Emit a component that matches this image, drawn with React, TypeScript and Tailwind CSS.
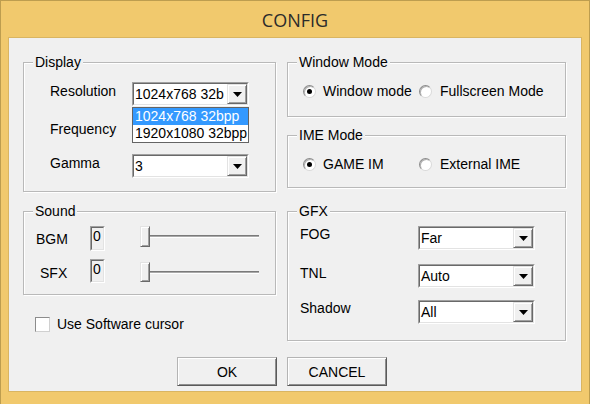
import type { ReactNode } from "react";

const FONT = "font-['Liberation_Sans',Arial,sans-serif]";

function GroupBox({
  title,
  className,
  children,
}: {
  title: string;
  className: string;
  children: ReactNode;
}) {
  return (
    <div
      className={`relative border border-[#b9b9b9] shadow-[inset_1px_1px_0_#ffffff,1px_1px_0_#ffffff] ${className}`}
    >
      <span className="absolute left-[9px] top-[-10px] bg-[#f0f0f0] px-[2px] text-[14px] leading-[18px] text-black">
        {title}
      </span>
      {children}
    </div>
  );
}

function Triangle() {
  return (
    <svg width="9" height="5" viewBox="0 0 9 5" className="block">
      <polygon points="0,0 9,0 4.5,5" fill="#000" />
    </svg>
  );
}

function Combo({ value, width = "w-[117px]" }: { value: string; width?: string }) {
  return (
    <div
      className={`h-[24px] ${width} border border-t-[#a0a0a0] border-l-[#a0a0a0] border-r-white border-b-white`}
    >
      <div className="flex h-full w-full border border-t-[#696969] border-l-[#696969] border-r-[#e3e3e3] border-b-[#e3e3e3] bg-white">
        <div className="min-w-0 flex-1 overflow-hidden whitespace-nowrap pl-[1px] text-[14px] leading-[20px] text-black">
          {value}
        </div>
        <div className="flex h-[20px] w-[20px] items-center justify-center border border-t-[#e3e3e3] border-l-[#e3e3e3] border-r-[#696969] border-b-[#696969] bg-[#f0f0f0] shadow-[inset_1px_1px_0_#ffffff,inset_-1px_-1px_0_#a0a0a0]">
          <Triangle />
        </div>
      </div>
    </div>
  );
}

function Radio({ checked }: { checked?: boolean }) {
  return (
    <span className="flex h-[13px] w-[13px] shrink-0 items-center justify-center rounded-full border border-t-[#8c8c8c] border-l-[#8c8c8c] border-r-[#d9d9d9] border-b-[#d9d9d9] bg-white shadow-[inset_1px_1px_0_#b0b0b0]">
      {checked ? <span className="h-[5px] w-[5px] rounded-full bg-black" /> : null}
    </span>
  );
}

function RadioRow({ first, second }: { first: string; second: string }) {
  return (
    <div className="flex h-[18px] items-center pl-[15px] text-[14px] leading-[18px] text-black">
      <div className="flex w-[116px] items-center gap-[7px] whitespace-nowrap">
        <Radio checked />
        <span>{first}</span>
      </div>
      <div className="flex items-center gap-[8px] whitespace-nowrap">
        <Radio />
        <span>{second}</span>
      </div>
    </div>
  );
}

function NumberBox() {
  return (
    <div className="h-full w-[15px] border border-t-[#a0a0a0] border-l-[#a0a0a0] border-r-white border-b-white">
      <div className="h-full w-full border border-t-[#696969] border-l-[#696969] border-r-[#e3e3e3] border-b-[#e3e3e3] bg-[#f0f0f0] pl-[1px] text-[14px] leading-[16px] text-black">
        0
      </div>
    </div>
  );
}

function Slider({ thumbH }: { thumbH: string }) {
  return (
    <div className="flex w-[119px] items-center">
      <div
        className={`${thumbH} w-[10px] shrink-0 border border-t-[#e3e3e3] border-l-[#e3e3e3] border-r-[#696969] border-b-[#696969] bg-[#f0f0f0] shadow-[inset_1px_1px_0_#ffffff,inset_-1px_-1px_0_#a0a0a0]`}
      />
      <div className="h-[3px] flex-1 border-t border-t-[#7a7a7a] bg-[#a9a9a9] border-b border-b-white" />
    </div>
  );
}

function PushButton({ label }: { label: string }) {
  return (
    <button className="h-[29px] w-[100px] border border-t-[#b4b4b4] border-l-[#b4b4b4] border-r-[#5a5a5a] border-b-[#5a5a5a] bg-[#f0f0f0] text-[14px] leading-[18px] text-black shadow-[inset_1px_1px_0_#ffffff,inset_-1px_-1px_0_#8f8f8f]">
      {label}
    </button>
  );
}

export default function App() {
  return (
    <div
      className={`h-[404px] w-[590px] overflow-hidden border-x border-t border-[#bd9d4f] bg-[#f1c96d] ${FONT}`}
    >
      <div className="flex h-[36px] items-center justify-center font-['Open_Sans',sans-serif] text-[18px] leading-none text-[#2b2b2b]">
        <span className="pt-[1px]">CONFIG</span>
      </div>

      <div className="mx-[7px] h-[355px] border border-[#d9b562] bg-[#f0f0f0] pl-[14px] pt-[24px]">
        {/* top row */}
        <div className="flex gap-[11px]">
          <GroupBox title="Display" className="h-[130px] w-[253px]">
            <div className="flex flex-col gap-[12px] pt-[19px] text-[14px] text-black">
              <div className="flex items-start">
                <span className="ml-[26px] w-[82px] leading-[18px]">Resolution</span>
                <Combo value="1024x768 32b" />
              </div>
              <div className="flex items-start">
                <span className="ml-[26px] mt-[2px] w-[82px] leading-[18px]">Frequency</span>
                <Combo value="" />
              </div>
              <div className="flex items-start">
                <span className="ml-[26px] w-[82px] leading-[18px]">Gamma</span>
                <Combo value="3" />
              </div>
            </div>
            {/* open dropdown list */}
            <div className="absolute left-[108px] top-[44px] w-[117px] border border-[#646464] bg-white text-[14px] leading-[17px]">
              <div className="bg-[#3399ff] pl-[2px] text-white">1024x768 32bpp</div>
              <div className="whitespace-nowrap pl-[2px] text-black">1920x1080 32bpp</div>
            </div>
          </GroupBox>

          <div className="flex w-[279px] flex-col">
            <GroupBox title="Window Mode" className="h-[55px] pt-[19px]">
              <RadioRow first="Window mode" second="Fullscreen Mode" />
            </GroupBox>
            <GroupBox title="IME Mode" className="mt-[18px] h-[53px] pt-[19px]">
              <RadioRow first="GAME IM" second="External IME" />
            </GroupBox>
          </div>
        </div>

        {/* second row */}
        <div className="mt-[19px] flex gap-[11px]">
          <div className="flex w-[253px] flex-col">
            <GroupBox title="Sound" className="h-[84px]">
              <div className="flex flex-col gap-[8px] pt-[14px] text-[14px] text-black">
                <div className="flex h-[25px] items-stretch">
                  <span className="ml-[12px] mt-[4px] w-[54px] leading-[18px]">BGM</span>
                  <NumberBox />
                  <div className="ml-[35px] flex items-start">
                    <Slider thumbH="h-[21px]" />
                  </div>
                </div>
                <div className="flex h-[24px] items-stretch">
                  <span className="ml-[16px] mt-[5px] w-[50px] leading-[18px]">SFX</span>
                  <NumberBox />
                  <div className="ml-[35px] flex items-start pt-[3px]">
                    <Slider thumbH="h-[20px]" />
                  </div>
                </div>
              </div>
            </GroupBox>
            <label className="ml-[12px] mt-[20px] flex items-center gap-[7px] text-[14px] leading-[18px] text-black">
              <span className="h-[15px] w-[15px] border border-t-[#8c8c8c] border-l-[#8c8c8c] border-r-[#d0d0d0] border-b-[#d0d0d0] bg-white" />
              Use Software cursor
            </label>
          </div>

          <GroupBox title="GFX" className="h-[130px] w-[279px]">
            <div className="flex flex-col pt-[14px] text-[14px] text-black">
              <div className="flex items-start">
                <span className="ml-[12px] w-[118px] leading-[17px]">FOG</span>
                <Combo value="Far" />
              </div>
              <div className="mt-[14px] flex items-start">
                <span className="ml-[12px] w-[118px] leading-[18px]">TNL</span>
                <Combo value="Auto" />
              </div>
              <div className="mt-[12px] flex items-start">
                <span className="ml-[12px] w-[118px] leading-[17px]">Shadow</span>
                <Combo value="All" />
              </div>
            </div>
          </GroupBox>
        </div>

        {/* buttons */}
        <div className="ml-[154px] mt-[16px] flex gap-[10px]">
          <PushButton label="OK" />
          <PushButton label="CANCEL" />
        </div>
      </div>
    </div>
  );
}
